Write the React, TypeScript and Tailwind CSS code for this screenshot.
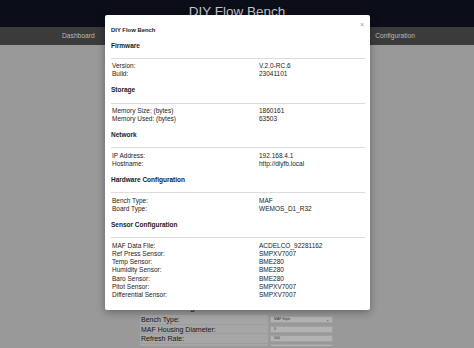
import React from "react";

const sections = [
  {
    title: "Firmware",
    rows: [
      ["Version:", "V.2.0-RC.6"],
      ["Build:", "23041101"],
    ],
  },
  {
    title: "Storage",
    rows: [
      ["Memory Size: (bytes)", "1860161"],
      ["Memory Used: (bytes)", "63503"],
    ],
  },
  {
    title: "Network",
    rows: [
      ["IP Address:", "192.168.4.1"],
      ["Hostname:", "http://diyfb.local"],
    ],
  },
  {
    title: "Hardware Configuration",
    rows: [
      ["Bench Type:", "MAF"],
      ["Board Type:", "WEMOS_D1_R32"],
    ],
  },
  {
    title: "Sensor Configuration",
    rows: [
      ["MAF Data File:", "ACDELCO_92281162"],
      ["Ref Press Sensor:", "SMPXV7007"],
      ["Temp Sensor:", "BME280"],
      ["Humidity Sensor:", "BME280"],
      ["Baro Sensor:", "BME280"],
      ["Pitot Sensor:", "SMPXV7007"],
      ["Differential Sensor:", "SMPXV7007"],
    ],
  },
];

const settings = [
  ["Bench Type:", "MAF Style", true],
  ["MAF Housing Diameter:", "0", false],
  ["Refresh Rate:", "500", false],
];

export default function App() {
  return (
    <div
      className="relative w-[474px] h-[348px] overflow-hidden bg-[#999999]"
      style={{ fontFamily: "'Liberation Sans', Arial, sans-serif" }}
    >
      {/* Header */}
      <header className="h-[27px] bg-[#0b0e19] flex items-start justify-center">
        <h1 className="text-[13.5px] leading-[16px] pt-[4px] text-[#c4c4c8]">DIY Flow Bench</h1>
      </header>

      {/* Nav */}
      <nav className="h-[18px] bg-[#3b3b3b] flex items-center justify-between pl-[62px] pr-[59px] text-[6.7px] text-[#b8b8b8]">
        <span>Dashboard</span>
        <span>Data</span>
        <span>Analysis</span>
        <span>Configuration</span>
      </nav>

      {/* Page content (behind modal) */}
      <main className="pt-[258px] pl-[141px]">
        <h2 className="text-[8px] leading-[10px] font-bold text-[#222]">Bench Settings</h2>
        <div className="mt-[2px] w-[195px] -ml-[1px] flex flex-col">
          {settings.map(([label, value, isSelect]) => (
            <div key={label as string} className="h-[9.5px] flex items-center">
              <div className="w-[128px] h-full bg-[#a6a6a6] border-b border-[#9c9c9c] pl-[1px] text-[7px] leading-[9px] text-[#161616]">
                {label}
              </div>
              <div className="flex-1 h-full flex items-center px-[2px]">
                <div className="w-full h-[7px] bg-[#b3b3b3] border border-[#a0a0a0] flex items-center justify-between px-[3px] text-[3.5px] text-[#333]">
                  <span>{value}</span>
                  {isSelect && <span className="text-[4px]">⌄</span>}
                </div>
              </div>
            </div>
          ))}
          {/* partially visible row at the bottom edge */}
          <div className="h-[2px] flex">
            <div className="w-[128px] h-full bg-[#a6a6a6]" />
            <div className="flex-1 px-[2px]">
              <div className="w-full h-full bg-[#b3b3b3] border-x border-t border-[#a0a0a0]" />
            </div>
          </div>
        </div>
      </main>

      {/* Modal */}
      <div className="absolute left-[105px] top-[15px] w-[265px] bg-white rounded-[2px] shadow-[0_2px_8px_rgba(0,0,0,0.35)] pl-[6px] pr-[5px] pt-[11px] pb-[11px] text-[#1a1a1a]">
        <span className="absolute top-[6px] right-[6px] text-[7px] leading-[8px] text-[#9a9a9a]">×</span>
        <div className="text-[5.9px] leading-[8px] font-bold">DIY Flow Bench</div>
        <div className="mt-[7.5px]">
          {sections.map((s, i) => (
            <section key={s.title} className={i === 0 ? "" : "mt-[7.8px]"}>
              <h3 className="text-[6.5px] leading-[8px] font-bold">{s.title}</h3>
              <div className="mt-[8.2px] h-px bg-[#dcdcdc]" />
              <div className="pt-[3.4px]">
                {s.rows.map(([k, v]) => (
                  <div key={k} className="grid grid-cols-[147px_1fr] pl-[1px] text-[6.5px] leading-[8.25px] text-[#222]">
                    <span>{k}</span>
                    <span>{v}</span>
                  </div>
                ))}
              </div>
            </section>
          ))}
        </div>
      </div>
    </div>
  );
}
